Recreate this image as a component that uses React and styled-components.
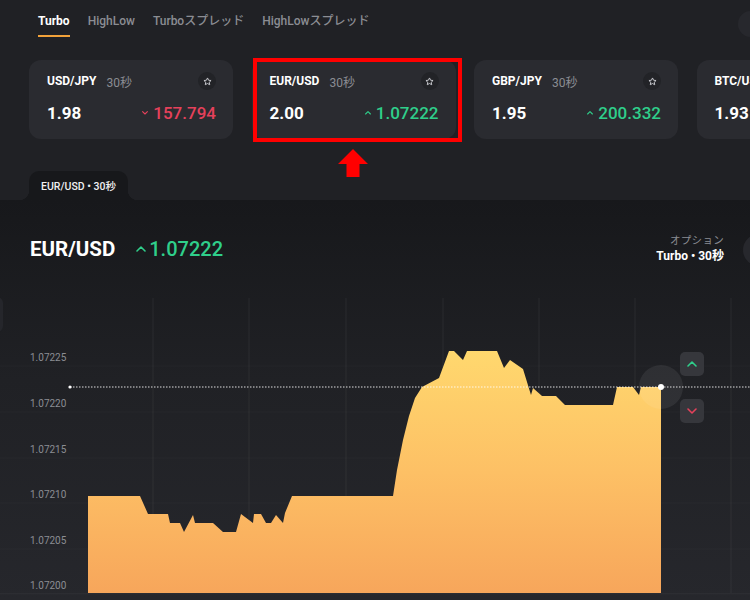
import styled, { createGlobalStyle } from 'styled-components'

const GlobalStyle = createGlobalStyle`
    html, body {
        margin: 0;
        padding: 0;
        background: #202125;
        font-family: Roboto, "Noto Sans CJK JP", "Liberation Sans", sans-serif;
    }
`

const Page = styled.div`
    width: 750px;
    height: 600px;
    overflow: hidden;
    display: flex;
    flex-direction: column;
    background: #202125;
`
const TabBar = styled.div`
    display: flex;
    align-items: flex-start;
    gap: 18px;
    padding-left: 38px;
`
const Tab = styled.div`
    height: 37px;
    box-sizing: border-box;
    padding-top: 14px;
    font-size: 12px;
    line-height: 14px;
    font-weight: ${p => (p.active ? 700 : 500)};
    color: ${p => (p.active ? '#ffffff' : '#8b8d93')};
    border-bottom: 2px solid ${p => (p.active ? '#f2a23a' : 'transparent')};
    white-space: nowrap;
`
const RoundButton = styled.div`
    flex-shrink: 0;
    width: ${p => p.size}px;
    height: ${p => p.size}px;
    border-radius: 50%;
    background: #27282d;
    margin-left: ${p => p.gap || 0}px;
    margin-right: ${p => p.pull}px;
    margin-top: ${p => p.top || 0}px;
`
const Spacer = styled.div`
    flex: 1;
`
const CardRow = styled.div`
    display: flex;
    gap: 18.5px;
    padding-left: 29px;
    margin-top: 23px;
`
const CardSlot = styled.div`
    position: relative;
    flex-shrink: 0;
`
const Card = styled.div`
    width: 204px;
    height: 79px;
    box-sizing: border-box;
    border-radius: 12px;
    background: #2a2b30;
    padding: 12px 17px 0 18px;
    display: flex;
    flex-direction: column;
    gap: 13px;
`
const CardTop = styled.div`
    display: flex;
    align-items: center;
    height: 18px;
`
const Pair = styled.span`
    font-size: 12px;
    font-weight: 700;
    color: #ffffff;
`
const Duration = styled.span`
    font-size: 12px;
    color: #8b8d93;
    margin-left: 10px;
`
const StarButton = styled.div`
    margin-left: auto;
    width: 18px;
    height: 18px;
    border-radius: 50%;
    background: #222327;
    display: flex;
    align-items: center;
    justify-content: center;
`
const CardBottom = styled.div`
    display: flex;
    align-items: center;
    height: 20px;
`
const Payout = styled.span`
    font-size: 17px;
    font-weight: 700;
    color: #ffffff;
`
const Price = styled.span`
    margin-left: auto;
    display: flex;
    align-items: center;
    gap: 5px;
    font-size: 17px;
    font-weight: 500;
    color: ${p => (p.up ? '#2fcf8b' : '#e5415b')};
`
const Highlight = styled.div`
    position: absolute;
    left: 1px;
    top: -2px;
    width: 209px;
    height: 84px;
    box-sizing: border-box;
    border: 4px solid #ff0000;
    pointer-events: none;
`
const Pointer = styled.svg`
    position: absolute;
    left: 86px;
    top: 89px;
`
const TabStrip = styled.div`
    display: flex;
    padding-left: 29px;
    margin-top: 32px;
`
const ChartTab = styled.div`
    position: relative;
    height: 29px;
    box-sizing: border-box;
    padding: 0 12px;
    display: flex;
    align-items: center;
    background: #17181b;
    border-radius: 10px 10px 0 0;
    font-size: 10.5px;
    font-weight: 500;
    color: #f0f0f2;

    &::before, &::after {
        content: '';
        position: absolute;
        bottom: 0;
        width: 10px;
        height: 10px;
    }
    &::before {
        left: -10px;
        background: radial-gradient(circle at 0 0, transparent 10px, #17181b 10.5px);
    }
    &::after {
        right: -10px;
        background: radial-gradient(circle at 100% 0, transparent 10px, #17181b 10.5px);
    }
`
const ChartPanel = styled.div`
    flex: 1;
    display: flex;
    flex-direction: column;
    background: linear-gradient(#17181b, #202125 45%, #26272c);
`
const ChartHeader = styled.div`
    height: 90px;
    box-sizing: border-box;
    padding: 34px 0 0 30px;
    display: flex;
    align-items: flex-start;
`
const Title = styled.div`
    display: flex;
    align-items: center;
    height: 30px;
    gap: 21px;
`
const Symbol = styled.span`
    font-size: 20.5px;
    font-weight: 700;
    color: #ffffff;
`
const Quote = styled.span`
    display: flex;
    align-items: center;
    gap: 3px;
    font-size: 20px;
    font-weight: 500;
    color: #2fcf8b;
`
const OptionInfo = styled.div`
    display: flex;
    flex-direction: column;
    align-items: flex-end;
`
const OptionLabel = styled.span`
    font-size: 10.5px;
    line-height: 14px;
    color: #8b8d93;
    letter-spacing: 0.3px;
`
const OptionValue = styled.span`
    font-size: 12px;
    line-height: 16px;
    font-weight: 700;
    color: #ffffff;
`
const ChartArea = styled.div`
    position: relative;
    height: 310px;
`
const SideTab = styled.div`
    position: absolute;
    left: -20px;
    top: 7px;
    width: 23px;
    height: 35px;
    border-radius: 6px;
    background: #25262b;
`
const TradeButton = styled.div`
    position: absolute;
    left: 680px;
    top: ${p => p.top}px;
    width: 24px;
    height: 24px;
    border-radius: 5px;
    background: #36373c;
    display: flex;
    align-items: center;
    justify-content: center;
`

const Chevron = ({ up, size = 7, color, stroke = 1.4 }) => (
    <svg width={size} height={size * 0.6} viewBox="0 0 10 6">
        <path
            d={up ? 'M1 5 L5 1 L9 5' : 'M1 1 L5 5 L9 1'}
            fill="none"
            stroke={color}
            strokeWidth={stroke * (10 / size)}
            strokeLinecap="round"
            strokeLinejoin="round"
        />
    </svg>
)

const Star = () => (
    <svg width="9" height="9" viewBox="0 0 24 24">
        <path
            d="M12 2.5l2.9 6.1 6.6.8-4.9 4.6 1.3 6.6L12 17.3l-5.9 3.3 1.3-6.6-4.9-4.6 6.6-.8z"
            fill="none"
            stroke="#c9cacf"
            strokeWidth="2.6"
            strokeLinejoin="round"
        />
    </svg>
)

const cards = [
    { pair: 'USD/JPY', payout: '1.98', price: '157.794', up: false },
    { pair: 'EUR/USD', payout: '2.00', price: '1.07222', up: true, marked: true },
    { pair: 'GBP/JPY', payout: '1.95', price: '200.332', up: true },
    { pair: 'BTC/USD', payout: '1.93', price: '67,120.5', up: true },
]

const tabs = ['Turbo', 'HighLow', 'Turboスプレッド', 'HighLowスプレッド']

// chart coords are page coords, shifted by the chart's top (290)
const TOP = 290
const points = [
    [88, 496], [140, 496], [148, 514], [168, 514], [170, 523], [180, 523], [184, 532],
    [193, 515], [195, 523], [213, 523], [223, 532], [236, 532], [241, 514], [253, 523],
    [254, 514], [261, 514], [266, 523], [271, 523], [276, 515], [283, 523], [285, 513],
    [292, 496], [393, 496], [397, 470], [403, 440], [409, 416], [415, 398], [422, 387],
    [439, 378], [449, 351], [454, 351], [463, 360], [467, 351], [497, 351], [504, 368],
    [510, 360], [523, 369], [531, 395], [533, 388], [542, 396], [556, 396], [565, 405],
    [613, 405], [617, 387], [633, 387], [639, 395], [641, 387], [661, 387],
]
const BOTTOM = 593
const areaPath =
    `M88 ${BOTTOM - TOP} ` +
    points.map(([x, y]) => `L${x} ${y - TOP}`).join(' ') +
    ` L661 ${BOTTOM - TOP} Z`

const yLabels = [
    ['1.07225', 357], ['1.07220', 403], ['1.07215', 449],
    ['1.07210', 494], ['1.07205', 540], ['1.07200', 585],
]
const vLines = [153, 249, 346, 443, 539, 635, 731]

const PriceChart = () => (
    <svg width="750" height="310" style={{ display: 'block' }}>
        <defs>
            <linearGradient id="area" x1="0" y1="0" x2="0" y2="1">
                <stop offset="0" stopColor="#ffd86e" />
                <stop offset="0.5" stopColor="#fdc065" />
                <stop offset="1" stopColor="#f7a65b" />
            </linearGradient>
        </defs>
        {vLines.map(x => (
            <line key={x} x1={x} y1="8" x2={x} y2={BOTTOM - TOP} stroke="#ffffff" strokeOpacity="0.06" />
        ))}
        {yLabels.map(([t, y]) => (
            <line key={'h' + t} x1="0" y1={y - TOP + 9} x2="750" y2={y - TOP + 9} stroke="#ffffff" strokeOpacity="0.025" />
        ))}
        {yLabels.map(([t, y]) => (
            <text
                key={t}
                x="30"
                y={y - TOP + 3.5}
                fontSize="10"
                fill="#8b8d93"
                fontFamily="Roboto, 'Liberation Sans', sans-serif"
            >
                {t}
            </text>
        ))}
        <path d={areaPath} fill="url(#area)" />
        <line x1="0" y1={BOTTOM - TOP + 0.5} x2="750" y2={BOTTOM - TOP + 0.5} stroke="#2c2d32" />
        <circle cx="661" cy={387 - TOP} r="22" fill="#ffffff" fillOpacity="0.07" />
        <line
            x1="70" y1={387 - TOP} x2="750" y2={387 - TOP}
            stroke="#ffffff" strokeOpacity="0.85" strokeWidth="1" strokeDasharray="1.5 1.5"
        />
        <circle cx="70" cy={387 - TOP} r="1.6" fill="#ffffff" />
        <circle cx="661" cy={387 - TOP} r="3" fill="#ffffff" />
    </svg>
)

const App = () => {
    return (
        <Page>
            <GlobalStyle />
            <TabBar>
                {tabs.map((t, i) => (
                    <Tab key={t} active={i === 0}>{t}</Tab>
                ))}
                <Spacer />
                <RoundButton size={26} pull={-14} top={11} />
            </TabBar>

            <CardRow>
                {cards.map(c => (
                    <CardSlot key={c.pair}>
                        <Card>
                            <CardTop>
                                <Pair>{c.pair}</Pair>
                                <Duration>30秒</Duration>
                                <StarButton><Star /></StarButton>
                            </CardTop>
                            <CardBottom>
                                <Payout>{c.payout}</Payout>
                                <Price up={c.up}>
                                    <Chevron up={c.up} size={6} color={c.up ? '#2fcf8b' : '#e5415b'} stroke={1.1} />
                                    {c.price}
                                </Price>
                            </CardBottom>
                        </Card>
                        {c.marked && (
                            <>
                                <Highlight />
                                <Pointer width="30" height="28" viewBox="0 0 30 28">
                                    <polygon points="15,0 30,15 21.5,15 21.5,28 8.5,28 8.5,15 0,15" fill="#ff0000" />
                                </Pointer>
                            </>
                        )}
                    </CardSlot>
                ))}
            </CardRow>

            <TabStrip>
                <ChartTab>EUR/USD • 30秒</ChartTab>
            </TabStrip>

            <ChartPanel>
                <ChartHeader>
                    <Title>
                        <Symbol>EUR/USD</Symbol>
                        <Quote>
                            <Chevron up size={10} color="#2fcf8b" stroke={1.6} />
                            1.07222
                        </Quote>
                    </Title>
                    <Spacer />
                    <OptionInfo>
                        <OptionLabel>オプション</OptionLabel>
                        <OptionValue>Turbo • 30秒</OptionValue>
                    </OptionInfo>
                    <RoundButton size={32} pull={-25} gap={19} />
                </ChartHeader>
                <ChartArea>
                    <SideTab />
                    <PriceChart />
                    <TradeButton top={62}>
                        <Chevron up size={10} color="#2fcf8b" stroke={1.6} />
                    </TradeButton>
                    <TradeButton top={109}>
                        <Chevron size={10} color="#e5415b" stroke={1.6} />
                    </TradeButton>
                </ChartArea>
            </ChartPanel>
        </Page>
    )
}

export default App
